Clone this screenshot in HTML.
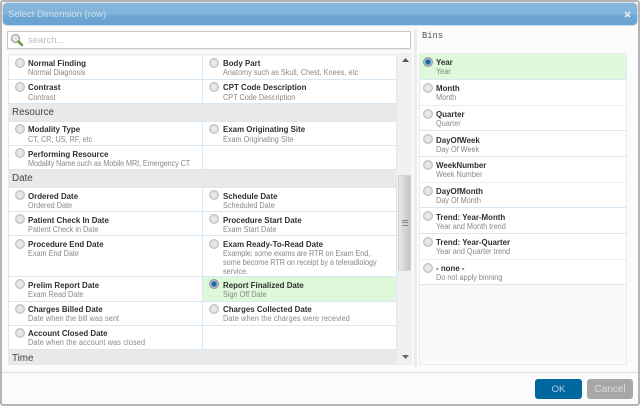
<!DOCTYPE html>
<html><head><meta charset="utf-8"><style>
html,body{margin:0;padding:0}
body{width:640px;height:406px;position:relative;overflow:hidden;background:#fff;font-family:"Liberation Sans",sans-serif}
div,span{position:absolute;box-sizing:border-box}
.t{font-size:8.600px;font-weight:bold;color:#2f2f2f;white-space:nowrap;line-height:12px;margin-top:0;transform:scaleX(.92);transform-origin:0 50%}
.s{font-size:8px;color:#888;white-space:nowrap;line-height:10px;margin-top:.5px;transform:scaleX(.91);transform-origin:0 50%}
.r{width:10px;height:10px;border-radius:50%;background:radial-gradient(circle at 50% 50%,#ececec 0,#e6e6e6 45%,#cfcfcf 75%,#b5b5b5 100%);border:1px solid #c0c0c0}
.r.on{background:radial-gradient(circle at 50% 50%,#0a5f9a 0,#1f6fa6 35%,#b8c4cc 60%,#9aa 100%);border-color:#999}
.l{height:1px;background:#d9e7f3}
.h{left:8px;width:389px;background:#e9e9e9;font-size:9.800px;color:#444;padding-left:4px}
</style></head><body>
<div style="left:0;top:0;width:640px;height:406px;background:#fbfbfb;border:2px solid #b5b5b5;border-radius:3px"></div>
<div style="left:3px;top:3px;width:634px;height:22px;border-radius:4px;background:linear-gradient(#88b7db,#82b3d9 50%,#6aa4d1 60%,#6aa3d0);box-shadow:0 0 0 1px #cfe0ee"></div>
<div style="left:8px;top:9px;font-size:9.500px;line-height:12px;color:#cfe2f2">Select Dimension (row)</div>
<svg style="position:absolute;left:624px;top:11px" width="7" height="7" viewBox="0 0 7 7"><path d="M1 1L6 6M6 1L1 6" stroke="#dbe9f4" stroke-width="1.800"/></svg>

<div style="left:7px;top:31px;width:404px;height:18px;background:#fff;border:1px solid #c8c8c8;box-shadow:0 1px 0 #e8e8e8"></div>
<svg style="position:absolute;left:10px;top:33px" width="14" height="14" viewBox="0 0 14 14"><circle cx="5.500" cy="5.500" r="4" fill="#e4e8e4" stroke="#a5a5a5" stroke-width="1.300"/><path d="M8.500 8.500L12 12" stroke="#5f9a3a" stroke-width="2.400" stroke-linecap="round"/></svg>
<div style="left:28px;top:34px;margin-top:0;font-size:9.500px;line-height:14px;color:#bbb">search...</div>

<div style="left:8px;top:53px;width:389px;height:312px;background:#fff"></div>
<div style="left:8px;top:53px;width:1px;height:312px;background:#d9e7f3"></div>
<div style="left:202px;top:53px;width:1px;height:296px;background:#d9e7f3"></div>
<div style="left:396px;top:53px;width:1px;height:296px;background:#d9e7f3"></div>
<div style="left:8px;top:53px;width:389px;height:3px;background:#f1f4f6"></div>
<div class="h" style="top:104px;height:17px;line-height:18px">Resource</div>
<div class="h" style="top:170px;height:17px;line-height:18px">Date</div>
<div class="h" style="top:350px;height:15px;line-height:17px">Time</div>
<div class="l" style="left:8px;width:389px;top:79px"></div>
<div class="l" style="left:8px;width:389px;top:103px"></div>
<div class="l" style="left:8px;width:389px;top:121px"></div>
<div class="l" style="left:8px;width:389px;top:145px"></div>
<div class="l" style="left:8px;width:389px;top:169px"></div>
<div class="l" style="left:8px;width:389px;top:187px"></div>
<div class="l" style="left:8px;width:389px;top:211px"></div>
<div class="l" style="left:8px;width:389px;top:235px"></div>
<div class="l" style="left:8px;width:389px;top:276px"></div>
<div class="l" style="left:8px;width:389px;top:301px"></div>
<div class="l" style="left:8px;width:389px;top:325px"></div>
<div class="l" style="left:8px;width:389px;top:349px"></div>
<div style="left:203px;top:277px;width:193px;height:24px;background:#def8da"></div>

<div class="r" style="left:15px;top:58px"></div><div class="t" style="left:28px;top:57px">Normal Finding</div><div class="s" style="left:28px;top:67px">Normal Diagnosis</div>
<div class="r" style="left:209px;top:58px"></div><div class="t" style="left:223px;top:57px">Body Part</div><div class="s" style="left:223px;top:67px">Anatomy such as Skull, Chest, Knees, etc</div>
<div class="r" style="left:15px;top:82px"></div><div class="t" style="left:28px;top:81px">Contrast</div><div class="s" style="left:28px;top:92px">Contrast</div>
<div class="r" style="left:209px;top:82px"></div><div class="t" style="left:223px;top:81px">CPT Code Description</div><div class="s" style="left:223px;top:92px">CPT Code Description</div>
<div class="r" style="left:15px;top:124px"></div><div class="t" style="left:28px;top:123px">Modality Type</div><div class="s" style="left:28px;top:134px">CT, CR, US, RF, etc</div>
<div class="r" style="left:209px;top:124px"></div><div class="t" style="left:223px;top:123px">Exam Originating Site</div><div class="s" style="left:223px;top:134px">Exam Originating Site</div>
<div class="r" style="left:15px;top:148px"></div><div class="t" style="left:28px;top:148px">Performing Resource</div><div class="s" style="left:28px;top:158px;letter-spacing:-.12px">Modality Name such as Mobile MRI, Emergency CT</div>
<div class="r" style="left:15px;top:190px"></div><div class="t" style="left:28px;top:190px">Ordered Date</div><div class="s" style="left:28px;top:200px">Ordered Date</div>
<div class="r" style="left:209px;top:190px"></div><div class="t" style="left:223px;top:190px">Schedule Date</div><div class="s" style="left:223px;top:200px">Scheduled Date</div>
<div class="r" style="left:15px;top:214px"></div><div class="t" style="left:28px;top:214px">Patient Check In Date</div><div class="s" style="left:28px;top:224px">Patient Check in Date</div>
<div class="r" style="left:209px;top:214px"></div><div class="t" style="left:223px;top:214px">Procedure Start Date</div><div class="s" style="left:223px;top:224px">Exam Start Date</div>
<div class="r" style="left:15px;top:239px"></div><div class="t" style="left:28px;top:238px">Procedure End Date</div><div class="s" style="left:28px;top:248px">Exam End Date</div>
<div class="r" style="left:209px;top:239px"></div><div class="t" style="left:223px;top:238px">Exam Ready-To-Read Date</div><div class="s" style="left:223px;top:248px;letter-spacing:-.1px">Example: some exams are RTR on Exam End,</div><div class="s" style="left:223px;top:257px;letter-spacing:-.05px">some become RTR on receipt by a teleradiology</div><div class="s" style="left:223px;top:266px">service.</div>
<div class="r" style="left:15px;top:279px"></div><div class="t" style="left:28px;top:279px">Prelim Report Date</div><div class="s" style="left:28px;top:289px">Exam Read Date</div>
<div class="r on" style="left:209px;top:279px"></div><div class="t" style="left:223px;top:279px">Report Finalized Date</div><div class="s" style="left:223px;top:289px">Sign Off Date</div>
<div class="r" style="left:15px;top:304px"></div><div class="t" style="left:28px;top:303px">Charges Billed Date</div><div class="s" style="left:28px;top:313px;letter-spacing:.1px">Date when the bill was sent</div>
<div class="r" style="left:209px;top:304px"></div><div class="t" style="left:223px;top:303px">Charges Collected Date</div><div class="s" style="left:223px;top:313px;letter-spacing:.15px">Date when the charges were recevied</div>
<div class="r" style="left:15px;top:328px"></div><div class="t" style="left:28px;top:327px">Account Closed Date</div><div class="s" style="left:28px;top:337px;letter-spacing:.16px">Date when the account was closed</div>

<div style="left:397px;top:53px;width:15px;height:312px;background:#f0f0f0"></div>
<div style="left:398px;top:175px;width:13px;height:96px;border-radius:2px;background:linear-gradient(90deg,#e8e8e8,#d6d6d6 50%,#c2c2c2);border:1px solid #d2d2d2"></div>
<div style="left:402px;top:220px;width:6px;height:6px;border-top:1px solid #888;border-bottom:1px solid #888"></div>
<div style="left:402px;top:222px;width:6px;height:1px;background:#888"></div>
<svg style="position:absolute;left:402px;top:58px" width="7" height="4"><path d="M3.500 0L7 4H0Z" fill="#555"/></svg>
<svg style="position:absolute;left:402px;top:355px" width="7" height="4"><path d="M3.500 4L7 0H0Z" fill="#666"/></svg>

<div style="left:414px;top:29px;width:3px;height:338px;background:#ececec"></div>
<div style="left:422px;top:30px;font-family:'Liberation Mono',monospace;font-size:8.800px;line-height:12px;color:#555">Bins</div>

<div style="left:419px;top:53px;width:208px;height:312px;background:#f9f9f9;border:1px solid #e8eaec"></div>
<div style="left:420px;top:54px;width:206px;height:25px;background:#def8da"></div>
<div style="left:420px;top:79px;width:206px;height:205px;background:#fff"></div>
<div class="l" style="left:420px;width:206px;top:79px"></div>
<div class="l" style="left:420px;width:206px;top:105px;background:#e6edf3"></div>
<div class="l" style="left:420px;width:206px;top:130px"></div>
<div class="l" style="left:420px;width:206px;top:156px"></div>
<div class="l" style="left:420px;width:206px;top:182px;background:#e6edf3"></div>
<div class="l" style="left:420px;width:206px;top:207px"></div>
<div class="l" style="left:420px;width:206px;top:233px"></div>
<div class="l" style="left:420px;width:206px;top:259px;background:#e6edf3"></div>
<div class="l" style="left:420px;width:206px;top:284px"></div>

<div class="r on" style="left:423px;top:57px"></div><div class="t" style="left:436px;top:56px">Year</div><div class="s" style="left:436px;top:66px">Year</div>
<div class="r" style="left:423px;top:83px"></div><div class="t" style="left:436px;top:82px">Month</div><div class="s" style="left:436px;top:92px">Month</div>
<div class="r" style="left:423px;top:109px"></div><div class="t" style="left:436px;top:108px">Quarter</div><div class="s" style="left:436px;top:118px">Quarter</div>
<div class="r" style="left:423px;top:134px"></div><div class="t" style="left:436px;top:134px">DayOfWeek</div><div class="s" style="left:436px;top:144px">Day Of Week</div>
<div class="r" style="left:423px;top:160px"></div><div class="t" style="left:436px;top:159px">WeekNumber</div><div class="s" style="left:436px;top:169px">Week Number</div>
<div class="r" style="left:423px;top:186px"></div><div class="t" style="left:436px;top:185px">DayOfMonth</div><div class="s" style="left:436px;top:195px">Day Of Month</div>
<div class="r" style="left:423px;top:211px"></div><div class="t" style="left:436px;top:211px">Trend: Year-Month</div><div class="s" style="left:436px;top:221px">Year and Month trend</div>
<div class="r" style="left:423px;top:237px"></div><div class="t" style="left:436px;top:236px">Trend: Year-Quarter</div><div class="s" style="left:436px;top:246px">Year and Quarter trend</div>
<div class="r" style="left:423px;top:263px"></div><div class="t" style="left:436px;top:262px">- none -</div><div class="s" style="left:436px;top:272px">Do not apply binning</div>

<div style="left:2px;top:372px;width:636px;height:1px;background:#ddd"></div>
<div style="left:535px;top:379px;width:47px;height:20px;border-radius:3px;background:#00689f;color:#b5d3e4;font-size:9.500px;line-height:22px;text-align:center">OK</div>
<div style="left:587px;top:379px;width:46px;height:20px;border-radius:3px;background:#a8a6a6;color:#dcdcdc;font-size:10px;line-height:22px;text-align:center">Cancel</div>
</body></html>
